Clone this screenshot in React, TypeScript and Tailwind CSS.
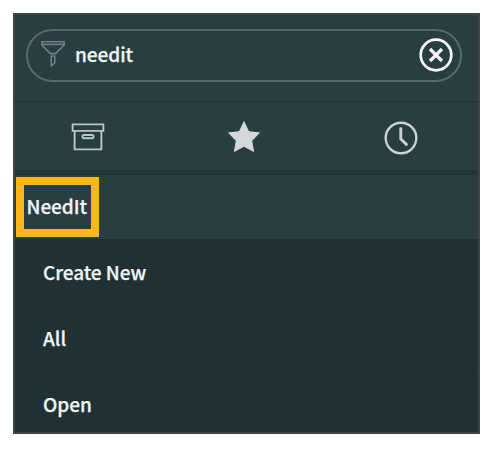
import React from "react";

const links = ["Create New", "All", "Open"];

function FunnelIcon() {
  return (
    <svg className="ml-[12px] mt-[9px] h-[28px] w-[26px] shrink-0" viewBox="0 0 26 28" fill="none" stroke="#6f7d84" strokeWidth="1.6" strokeLinejoin="round">
      <path d="M1.8 1.8H24.2V5L15.5 13.6H10.4L1.8 5Z" />
      <path d="M2 4.4H24M11.2 16H14.8V22.8L11.2 26Z" />
    </svg>
  );
}

function ClearIcon() {
  return (
    <svg className="mr-[6px] mt-[6px] h-[36px] w-[36px]" viewBox="0 0 36 36" fill="none" stroke="#f7f9f9">
      <circle cx="18" cy="18" r="15.3" strokeWidth="2.7" />
      <path d="M12 12L24 24M24 12L12 24" strokeWidth="3.2" />
    </svg>
  );
}

function ArchiveIcon() {
  return (
    <svg className="h-[30px] w-[36px]" viewBox="0 0 36 30" fill="none" stroke="#bcc6c8" strokeWidth="1.9" strokeLinejoin="round">
      <path d="M2.6 2.4H33.4V8.9H2.6ZM4.6 8.9V27.4H31.4V8.9" />
      <rect x="12.4" y="13" width="11.2" height="3.2" rx="1.6" />
    </svg>
  );
}

function StarIcon() {
  return (
    <svg className="h-[34px] w-[34px]" viewBox="0 0 34 34" fill="#d3d9da">
      <path d="M17 .8L22 11.3L33.2 12.6L25.2 20.8L27.2 32.2L17 26.7L6.8 32.2L8.8 20.8L.8 12.6L12 11.3Z" />
    </svg>
  );
}

function ClockIcon() {
  return (
    <svg className="h-[36px] w-[36px]" viewBox="0 0 36 36" fill="none" stroke="#cbd2d3" strokeLinecap="round" strokeLinejoin="round">
      <circle cx="18" cy="18" r="15.3" strokeWidth="2.4" />
      <path d="M17.8 8.6V19L23.4 24.4" strokeWidth="2.9" />
    </svg>
  );
}

export default function App() {
  return (
    <div className="h-[450px] w-[498px] bg-white pl-[13px] pt-[13px] font-['Noto_Sans_CJK_SC',sans-serif] text-[19px] font-medium leading-[28px] tracking-[-0.05px] text-[#f1f4f4] [-webkit-text-stroke:0.25px_#f1f4f4]">
      <div className="flex h-[421px] w-[467px] flex-col border-2 border-[#414444] bg-[#203134]">
        <div className="h-[88px] shrink-0 border-b-2 border-[#223639] bg-[#283e41] px-[11px] pt-[14px]">
          <div className="flex h-[53px] w-[436px] items-start rounded-full border-2 border-[#59686d]">
            <FunnelIcon />
            <span className="ml-[9px] mt-[9px] flex-1">needit</span>
            <ClearIcon />
          </div>
        </div>
        <div className="flex h-[67px] shrink-0 items-start bg-[#283e41] pt-[17px]">
          <div className="ml-[55px] mt-[2px]"><ArchiveIcon /></div>
          <div className="ml-[121px]"><StarIcon /></div>
          <div className="ml-[122px]"><ClockIcon /></div>
        </div>
        <div className="h-[5px] shrink-0 bg-[#213337]" />
        <div className="h-[64px] shrink-0 bg-[#283e41] pl-px pt-[2px]">
          <div className="flex h-[60px] w-[83px] items-center border-[8px] border-[#ffb617] pb-[2px] pl-[2.5px]">NeedIt</div>
        </div>
        {links.map((label) => (
          <div key={label} className="flex h-[66px] shrink-0 items-center border-b-2 border-[#1e2d2e] pl-[28px] pt-px last:h-[61px] last:border-b-0 last:pt-[4px]">
            <span>{label}</span>
          </div>
        ))}
      </div>
    </div>
  );
}
